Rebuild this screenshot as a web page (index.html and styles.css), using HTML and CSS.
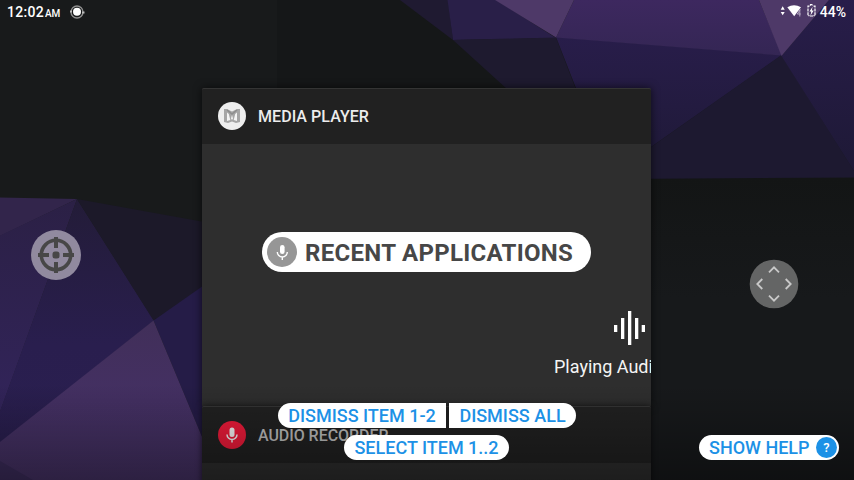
FILE: index.html
```html
<!DOCTYPE html>
<html lang="en">
<head>
<meta charset="utf-8">
<title>Recent applications</title>
<link rel="stylesheet" href="styles.css">
</head>
<body>
<div class="screen">
  <svg class="wallpaper" viewBox="0 0 854 480" aria-hidden="true">
    <defs>
      <linearGradient id="dusk" x1="0" y1="0" x2="0" y2="1"><stop offset="0" stop-color="#281d4a"/><stop offset="1" stop-color="#1e1936"/></linearGradient>
      <linearGradient id="violet" x1="0" y1="0" x2="0" y2="1"><stop offset="0" stop-color="#3d285f"/><stop offset="1" stop-color="#342654"/></linearGradient>
      <linearGradient id="indigo" x1="0" y1="0" x2="0" y2="1"><stop offset="0" stop-color="#231c38"/><stop offset=".6" stop-color="#291e4e"/><stop offset="1" stop-color="#2a1f50"/></linearGradient>
      <linearGradient id="mauve" x1="0" y1="0" x2="0" y2="1"><stop offset="0" stop-color="#412f59"/><stop offset=".5" stop-color="#443063"/><stop offset="1" stop-color="#463266"/></linearGradient>
      <linearGradient id="plum" x1="0" y1="0" x2="0" y2="1"><stop offset="0" stop-color="#2b2045"/><stop offset="1" stop-color="#32245a"/></linearGradient>
      <linearGradient id="night" x1="0" y1="0" x2="0" y2="1"><stop offset="0" stop-color="#131515"/><stop offset=".4" stop-color="#17191b"/><stop offset="1" stop-color="#17191b"/></linearGradient>
    </defs>
    <rect width="854" height="480" fill="#181a1b"/>
    <path fill="#151718" d="M277 0H854V178H277z"/>
    <path fill="url(#night)" d="M620 178H854V480H620z"/>
    <path fill="#1f1a31" d="M400 0H448L453 40z"/>
    <path fill="#291f48" d="M447.500 0H496L556 38L453 40z"/>
    <path fill="#1e1a2f" d="M453 40L556 37.500L580 100H519z"/>
    <path fill="url(#dusk)" d="M556 37L782 55L651 147L610 175z"/>
    <path fill="url(#violet)" d="M574 0H759L782 55.500L556 37.500z"/>
    <path fill="#4e3968" d="M495 0H574L556 37.500z"/>
    <path fill="#1d1930" d="M781.500 55L854 171V177.500L620 179V169z"/>
    <path fill="url(#dusk)" d="M829 0H854V171L781.500 56z"/>
    <path fill="#4e3968" d="M759 0H829L781.500 56z"/>
    <path fill="#32254b" d="M0 197.500L77 199L0 236z"/>
    <path fill="url(#plum)" d="M0 235.500L77 199L0 412z"/>
    <path fill="url(#indigo)" d="M77 199L154 320.500L0 443V411z"/>
    <path fill="#1c1929" d="M77 199L210 223V282L153.500 320.500z"/>
    <path fill="#251c47" d="M153.500 320.500L210 281V456z"/>
    <path fill="url(#mauve)" d="M153.500 320.500L210 456V480H0V442z"/>
    <path fill="#3c2c5c" d="M0 461L33 480H0z"/>
  </svg>

  <header class="status">
    <span class="clock">12:02<small>AM</small></span>
    <svg class="sync" width="16" height="14" viewBox="0 0 16 14"><circle cx="8" cy="7" r="6" fill="none" stroke="#8f8f8f" stroke-width="1.300"/><path d="M1 6.500h2M13 7.500h2.500" stroke="#bbb" stroke-width="2"/><circle cx="8" cy="6.800" r="4" fill="#fff"/></svg>
    <span class="grow"></span>
    <svg class="signals" width="36" height="16" viewBox="0 0 36 16" fill="#fff">
      <path d="M.7 6.700L2.700 3.300L4.700 6.700zM.7 9L2.700 12.300L4.700 9z"/>
      <path d="M7.300 4.200Q14 .2 21 4.200L14.200 13.200z"/>
      <path d="M20.300 6.500l-3 4.500h3.500M19.800 6.500v7" fill="none" stroke="#b5a9c3" stroke-width="1"/>
      <path d="M30.500 2.700v-1h2v1M29.500 3.100h-1.500v9.500h1.500M33.500 3.100h1.500v9.500h-1.500M30 13h3.500" fill="none" stroke="#fff" stroke-width="1.200" stroke-dasharray="3 .8"/>
      <path d="M32.600 3.800L29.500 8.400H31.300L30.500 12.500L33.700 7.400H31.800z"/>
    </svg>
    <span class="battery">44%</span>
  </header>

  <main class="recents">
    <section class="task">
      <div class="title">
        <svg width="28" height="28" viewBox="0 0 28 28"><circle cx="14" cy="14" r="14" fill="#eee"/><path fill="#a6a6a6" d="M6 7H9L14 9.500L19 7H22V20L18 21L14 19.500L10 21L6 20z"/><path fill="#f4f4f4" d="M9 10.500L10.800 12L12.300 18L9 19zM19 10.500L17.200 12L15.700 18L19 19zM14 13L15 16.500L14 18L13 16.500z"/><path d="M9 8L14 12L19 8" fill="none" stroke="#8d8d8d" stroke-width="1.500"/></svg>
        <span>MEDIA PLAYER</span>
      </div>
      <div class="preview">
        <div class="playing">
          <svg width="32" height="36" viewBox="0 0 32 36" fill="#fff"><path d="M0 15h3.300v7H0zM7 8h3.300v21H7zM14 1h3.300v34H14zM21 8h3.300v21H21zM27.700 15H31v7h-3.300z"/></svg>
          <span>Playing Audio Track</span>
        </div>
      </div>
    </section>
    <section class="task next">
      <div class="title">
        <svg width="28" height="28" viewBox="0 0 28 28"><circle cx="14" cy="14" r="14" fill="#ee1b3a"/><rect x="11.500" y="6.500" width="5" height="9.500" rx="2.500" fill="#f5f5f5"/><path d="M9 13.500a5 5 0 0 0 10 0M14 18.500v3" fill="none" stroke="#f5f5f5" stroke-width="1.500"/></svg>
        <span>AUDIO RECORDER</span>
      </div>
      <div class="preview"></div>
    </section>
  </main>

  <div class="scrim"></div>

  <svg class="aim" width="50" height="50" viewBox="0 0 50 50"><circle cx="25" cy="25" r="25" fill="#918a9f"/><g fill="none" stroke="#474747"><circle cx="25" cy="25" r="14.700" stroke-width="3.600"/><path d="M25 7v11M25 32v11M7 25h11M32 25h11" stroke-width="4"/></g><rect x="21.500" y="21.500" width="7" height="7" rx="2.500" fill="#474747"/></svg>
  <svg class="pad" width="50" height="50" viewBox="0 0 50 50"><circle cx="25" cy="25" r="24.300" fill="#646565"/><path d="M20 13.300L25 8.300L30 13.300M20 36.700L25 41.700L30 36.700M13.300 20L8.300 25L13.300 30M36.700 20L41.700 25L36.700 30" fill="none" stroke="#c9c9c9" stroke-width="1.800"/></svg>

  <div class="heading">
    <svg width="30" height="30" viewBox="0 0 30 30"><circle cx="15" cy="15" r="15" fill="#969696"/><rect x="13" y="8" width="4.600" height="9" rx="2.300" fill="#fff"/><path d="M10.300 15a5 5 0 0 0 10 0M15.300 20v3" fill="none" stroke="#fff" stroke-width="1.400"/></svg>
    <span>RECENT APPLICATIONS</span>
  </div>

  <nav class="commands">
    <div class="pair"><button class="command left">DISMISS ITEM 1-2</button><button class="command right">DISMISS ALL</button></div>
    <button class="command">SELECT ITEM 1..2</button>
  </nav>
  <button class="command help">SHOW HELP<span class="mark">?</span></button>
</div>
</body>
</html>
```

FILE: styles.css
```css
* { box-sizing: border-box; }
body { margin: 0; font-family: Roboto, "Liberation Sans", sans-serif; }
svg { display: block; flex: none; }
.screen { position: relative; width: 854px; height: 480px; overflow: hidden; background: #181a1b; }
.wallpaper { position: absolute; inset: 0; width: 854px; height: 480px; }

.status { position: relative; display: flex; align-items: center; height: 24px; padding: 0 8px 0 7px; color: #fff; font-weight: 500; font-size: 14px; line-height: 24px; }
.clock { letter-spacing: .3px; width: 62px; white-space: nowrap; padding-top: 1px; }
.clock small { font-size: 10px; letter-spacing: -.2px; margin-left: 1px; }
.sync { margin-bottom: 0; }
.grow { flex: 1; }
.signals { margin-right: 4px; margin-top: -2px; }

.recents { position: relative; width: 449px; margin: 64px 0 0 202px; height: 392px; }
.task { display: flex; flex-direction: column; height: 318px; border-radius: 2px 2px 0 0; background: #2e2e2e; box-shadow: 0 0 8px rgba(0, 0, 0, .65); }
.title { display: flex; align-items: center; gap: 12px; height: 56px; flex: none; padding: 0 0 1px 16px; background: #212121; border-top: 1px solid #343434; border-radius: 2px 2px 0 0; color: #ececec; font-size: 16px; font-weight: 500; letter-spacing: .05px; }
.preview { flex: 1; overflow: hidden; display: flex; justify-content: flex-end; padding-top: 166px; }
.playing { width: 97px; color: #f5f5f5; font-size: 18px; line-height: 24px; white-space: nowrap; }
.playing svg { margin: 0 0 9px 60px; }
.next { position: relative; height: 80px; box-shadow: 0 0 6px rgba(0, 0, 0, .65); }
.next .title { height: 57px; padding-bottom: 0; color: #bdbdbd; letter-spacing: -.05px; }

.scrim { position: absolute; inset: 384px 0 0; background: linear-gradient(rgba(0, 0, 0, 0), rgba(0, 0, 0, .36)); }
.aim { position: absolute; left: 31px; top: 230px; }
.pad { position: absolute; left: 749px; top: 259px; }

.heading { position: absolute; left: 262px; top: 232px; width: 329px; height: 40px; padding-left: 5px; display: flex; align-items: center; gap: 8px; border-radius: 20px; background: #fff; color: #474747; font-size: 24px; font-weight: 700; letter-spacing: .3px; white-space: nowrap; }
.heading span { padding-top: 2px; }

.commands { position: absolute; top: 403px; left: 0; width: 853px; display: flex; flex-direction: column; align-items: center; gap: 7px; }
.pair { display: flex; gap: 3px; margin-left: 1px; }
.command { display: flex; align-items: center; justify-content: center; width: 165px; height: 25px; padding: 0; border: 0; border-radius: 13px; background: #fff; color: #1c91e6; font: 500 18px/25px Roboto, "Liberation Sans", sans-serif; white-space: nowrap; }
.left { width: 168px; border-radius: 13px 0 0 13px; }
.right { width: 127px; border-radius: 0 13px 13px 0; }
.help { position: absolute; left: 699px; top: 435px; width: 140px; justify-content: flex-start; padding-left: 10px; }
.mark { margin-left: auto; margin-right: 2px; width: 21px; height: 21px; border-radius: 50%; background: #1c91e6; color: #fff; font-size: 13px; line-height: 21px; text-align: center; }
```
